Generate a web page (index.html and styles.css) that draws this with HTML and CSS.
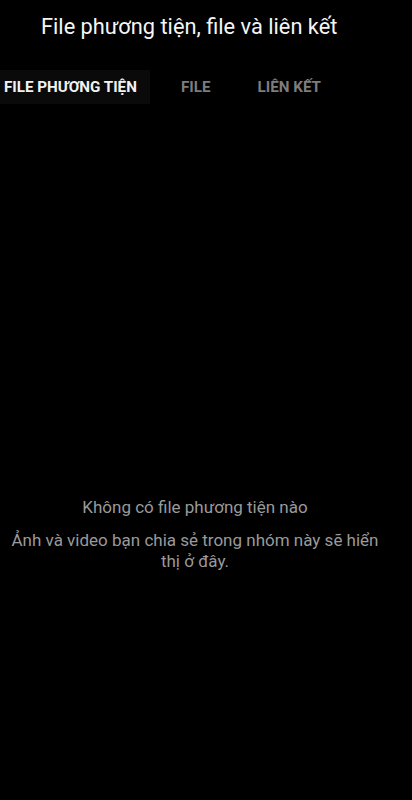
FILE: index.html
```html
<!DOCTYPE html>
<html lang="vi">
<head>
<meta charset="utf-8">
<link rel="stylesheet" href="styles.css">
</head>
<body>
<div class="screen">
  <header class="header">
    <h1 class="title">File phương tiện, file và liên kết</h1>
  </header>
  <nav class="tabs">
    <div class="tab active">FILE PHƯƠNG TIỆN</div>
    <div class="tab">FILE</div>
    <div class="tab">LIÊN KẾT</div>
  </nav>
  <main class="empty">
    <p class="empty-title">Không có file phương tiện nào</p>
    <p class="empty-desc">Ảnh và video bạn chia sẻ trong nhóm này sẽ hiển thị ở đây.</p>
  </main>
</div>
</body>
</html>
```

FILE: styles.css
```css
html, body {
  margin: 0;
  padding: 0;
  background: #000;
}
body {
  font-family: Roboto, "Noto Sans", sans-serif;
  color: #fff;
}
.screen {
  width: 412px;
  height: 800px;
  display: flex;
  flex-direction: column;
  background: #000;
}
.header {
  height: 52px;
  padding-left: 41px;
  display: flex;
  align-items: center;
}
.title {
  margin: 0;
  font-size: 21.8px;
  font-weight: 400;
  color: #f5f5f5;
  padding-top: 1px;
}
.tabs {
  display: flex;
  margin-top: 18px;
  height: 34px;
}
.tab {
  display: flex;
  align-items: center;
  font-size: 15.2px;
  font-weight: 700;
  color: #7d7d7d;
  white-space: nowrap;
}
.tab.active {
  box-sizing: border-box;
  background: #0a0a0a;
  color: #f2f2f2;
  padding-left: 4px;
  width: 150px;
}
.tab:nth-child(2) {
  margin-left: 31px;
}
.tab:nth-child(3) {
  margin-left: 47px;
}
.empty {
  flex: 1;
  display: flex;
  flex-direction: column;
  align-items: center;
  padding-top: 393px;
  width: 390px;
  text-align: center;
}
.empty-title {
  margin: 0;
  font-size: 17px;
  color: #9a9a9a;
  line-height: 21px;
}
.empty-desc {
  margin: 12px 0 0;
  font-size: 17px;
  color: #9a9a9a;
  line-height: 21px;
  width: 376px;
}
```
